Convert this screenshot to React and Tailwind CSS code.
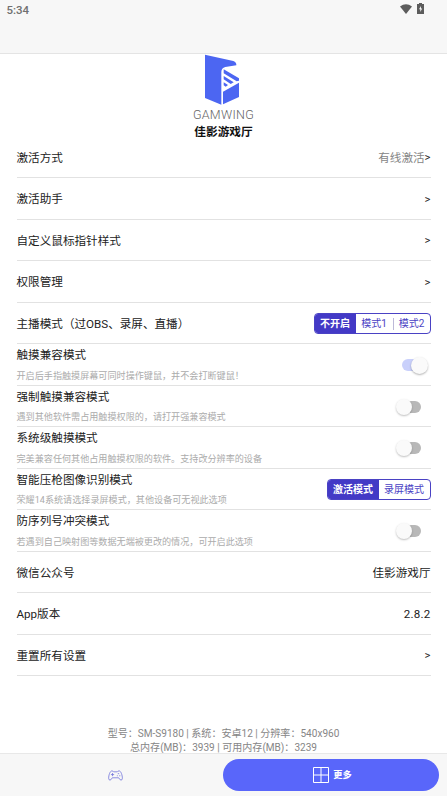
import React from 'react';

const Logo = () => (
    <svg viewBox="72 15 114 153" className="w-[38px] h-[51px] shrink-0 mr-[3px] -mt-[0.5px]" fill="#4c66f2">
        <path d="M78 17 L163 36 Q173 40 172 49 L139 54 Q127 57 127 69 V167 L78 147 Z" />
        <path d="M132 128 L180 101 V144 L132 166 Z" />
        <path d="M134 61 L180 88 V95 L173 97 L134 73 Z" />
        <path d="M134 81 L164 100 L155 105 L134 91 Z" />
        <path d="M134 100 L147 108 L140 113 L134 109 Z" />
    </svg>
);

const Row = ({ title, desc, children }) => (
    <div className="h-[41.5px] shrink-0 border-b border-[#e2e2e2] flex items-center justify-between">
        {desc ? (
            <div className="self-start pt-[3px]">
                <div className="text-[11.6px] leading-[17px]">{title}</div>
                <div className="text-[9.1px] leading-[14px] mt-[4.5px] text-[#ababab]">{desc}</div>
            </div>
        ) : (
            <div className="text-[11.6px] leading-[17px] pt-[3px]">{title}</div>
        )}
        <div className="flex items-center text-[11.6px] leading-[17px] pt-[2px]">{children}</div>
    </div>
);

const Arrow = () => <span className="text-[11.3px] leading-[17px]">&gt;</span>;

const Toggle = ({ on }) =>
    on ? (
        <div className="flex items-center w-[26px] mr-[3px]">
            <div className="w-[22px] h-[12px] rounded-full bg-[#c9d0fb]" />
            <div className="w-[17px] h-[17px] -ml-[13px] shrink-0 rounded-full bg-[#fafafa] shadow-[0_1px_2px_rgba(0,0,0,0.3)]" />
        </div>
    ) : (
        <div className="flex items-center mr-[10px]">
            <div className="w-[16px] h-[16px] z-10 shrink-0 rounded-full bg-[#fafafa] shadow-[0_1px_2px_rgba(0,0,0,0.25)]" />
            <div className="w-[18px] h-[12px] -ml-[9px] rounded-full bg-[#b8b8b8]" />
        </div>
    );

const App = () => {
    return (
        <div className="w-[447px] h-[796px] overflow-hidden flex flex-col bg-white text-[#222] font-[Roboto,'Noto_Sans_CJK_SC',sans-serif]">
            {/* Status bar */}
            <header className="h-[54px] shrink-0 bg-[#f7f7f7] border-b border-[#e4e4e4] flex items-start justify-between pl-[6.5px] pr-[23px]">
                <span className="text-[11.5px] leading-[21px] font-medium text-[#707070]">5:34</span>
                <div className="flex items-center gap-[5px] pt-[3px]">
                    <svg viewBox="0 0 12 10" className="w-[12px] h-[10px]" fill="#5c5c5c">
                        <path d="M0 2.5 Q6 -2 12 2.5 L6 10 Z" />
                    </svg>
                    <svg viewBox="0 0 7 11" className="w-[7px] h-[11px]">
                        <path d="M2 0 H5 V1 H7 V11 H0 V1 H2 Z" fill="#5c5c5c" />
                        <path d="M4 3 L2 6.3 H3.3 V9 L5.2 5.5 H4 Z" fill="#f7f7f7" />
                    </svg>
                </div>
            </header>

            <main className="flex-1 min-h-0 px-[16.5px] flex flex-col">
                {/* Logo */}
                <div className="h-[82.5px] shrink-0 flex flex-col items-center">
                    <Logo />
                    <div className="text-[12.5px] leading-[14px] mt-[3.5px] tracking-[0.3px] font-light text-[#666] whitespace-nowrap">GAMWING</div>
                    <div className="text-[11.7px] leading-[15px] mt-[3px] font-bold text-[#111]">佳影游戏厅</div>
                </div>

                {/* Settings */}
                <Row title="激活方式">
                    <span className="text-[#858585] pt-px">有线激活</span>
                    <Arrow />
                </Row>
                <Row title="激活助手"><Arrow /></Row>
                <Row title="自定义鼠标指针样式"><Arrow /></Row>
                <Row title="权限管理"><Arrow /></Row>
                <Row title="主播模式（过OBS、录屏、直播）">
                    <div className="h-[21px] w-[117px] rounded-[4px] border border-[#4a42c4] flex items-center overflow-hidden text-[10px] text-[#4a42c4]">
                        <span className="w-[41px] h-full flex items-center justify-center bg-[#4339c6] text-white font-bold">不开启</span>
                        <span className="w-[37px] text-center">模式1</span>
                        <span className="flex-1 h-[12px] flex items-center justify-center border-l border-[#bcb9d8]">模式2</span>
                    </div>
                </Row>
                <Row title="触摸兼容模式" desc="开启后手指触摸屏幕可同时操作键鼠，并不会打断键鼠！"><Toggle on /></Row>
                <Row title="强制触摸兼容模式" desc="遇到其他软件需占用触摸权限的，请打开强兼容模式"><Toggle /></Row>
                <Row title="系统级触摸模式" desc="完美兼容任何其他占用触摸权限的软件。支持改分辨率的设备"><Toggle /></Row>
                <Row title="智能压枪图像识别模式" desc="荣耀14系统请选择录屏模式，其他设备可无视此选项">
                    <div className="h-[21px] w-[104px] rounded-[4px] border border-[#4a42c4] flex items-center overflow-hidden text-[10px] text-[#4a42c4]">
                        <span className="w-[51px] h-full flex items-center justify-center bg-[#4339c6] text-white font-bold">激活模式</span>
                        <span className="flex-1 text-center">录屏模式</span>
                    </div>
                </Row>
                <Row title="防序列号冲突模式" desc="若遇到自己映射图等数据无端被更改的情况，可开启此选项"><Toggle /></Row>
                <Row title="微信公众号"><span className="pt-px">佳影游戏厅</span></Row>
                <Row title="App版本"><span className="tracking-[0.2px]">2.8.2</span></Row>
                <Row title="重置所有设置"><Arrow /></Row>

                {/* Device info */}
                <div className="mt-auto -mb-[1.5px] text-center text-[10.05px] leading-[14px] text-[#868686]">
                    <div>型号：SM-S9180 | 系统：安卓12 | 分辨率：540x960</div>
                    <div>总内存(MB)：3939 | 可用内存(MB)：3239</div>
                </div>
            </main>

            {/* Bottom tabs */}
            <nav className="h-[43px] shrink-0 bg-[#f7f7f7] border-t border-[#e8e8e8] flex items-center pl-[8px] pr-[8px]">
                <div className="w-[215px] flex justify-center">
                    <svg viewBox="0 0 16 12" className="w-[15px] h-[11px]" fill="none" stroke="#7477dc" strokeWidth="0.9">
                        <path d="M4 1 Q5.5 1 6 2 H10 Q10.5 1 12 1 C14 1 15.5 6 15.5 9 Q15.5 11 14 11 Q12.8 11 11.5 8.5 H4.5 Q3.2 11 2 11 Q.5 11 .5 9 C.5 6 2 1 4 1 Z" />
                        <path d="M3 5 H6.5 M4.75 3.3 V6.7 M10.5 4 H12 M12 6.3 H13.3 M9.5 6.3 H10.5" />
                    </svg>
                </div>
                <div className="flex-1 h-[32px] rounded-full bg-[#5966fa] text-white flex items-center justify-center gap-[4px] pl-[3px]">
                    <svg viewBox="0 0 16 16" className="w-[16px] h-[16px]" fill="none" stroke="currentColor">
                        <path d="M.5 .5 H15.5 V15.5 H.5 Z M8 .5 V15.5 M.5 8 H15.5" />
                    </svg>
                    <span className="text-[9.3px] font-bold">更多</span>
                </div>
            </nav>
        </div>
    );
};

export default App;
